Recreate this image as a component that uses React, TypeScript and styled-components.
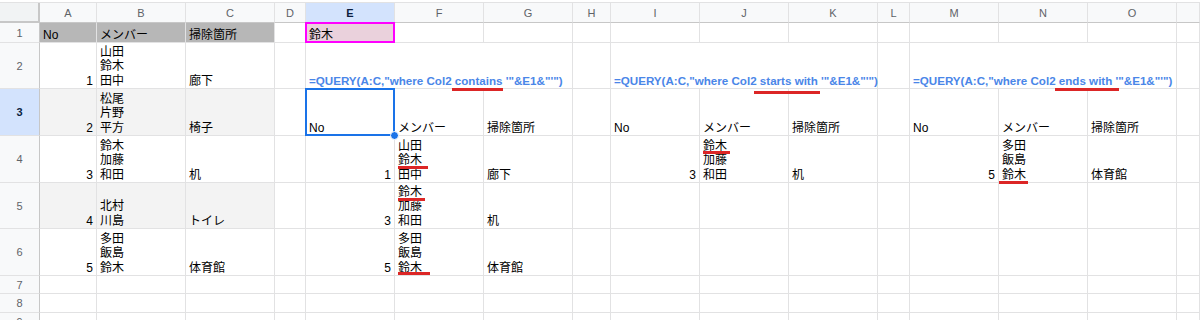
import React from "react";
import styled, { createGlobalStyle } from "styled-components";

const GlobalStyle = createGlobalStyle`
  html, body {
    margin: 0;
    padding: 0;
    background: #fff;
    overflow: hidden;
  }
  body {
    font-family: "Liberation Sans", Arial, "Noto Sans CJK JP", sans-serif;
  }
`;

const COL_WIDTHS = [40, 57, 89, 89, 31, 89, 89, 89, 38, 89, 89, 89, 32, 89, 89, 89, 23];
const ROW_HEIGHTS = [20, 20, 46, 47, 47, 46, 47, 18, 19, 19];
const LETTERS = ["A", "B", "C", "D", "E", "F", "G", "H", "I", "J", "K", "L", "M", "N", "O", "P"];

const GRID = "#e2e2e3";
const HEAD_EDGE = "#c7c7c7";

const Sheet = styled.div`
  display: grid;
  grid-template-columns: ${COL_WIDTHS.map((w) => w + "px").join(" ")};
  grid-template-rows: ${ROW_HEIGHTS.map((h) => h + "px").join(" ")};
  margin-top: 2px;
  border-top: 1px solid ${GRID};
  width: 1200px;
  overflow: hidden;
`;

const Corner = styled.div`
  box-sizing: border-box;
  background: #f1f3f4;
  border-right: 2px solid ${HEAD_EDGE};
  border-bottom: 2px solid ${HEAD_EDGE};
`;

const ColHead = styled.div<{ $active?: boolean }>`
  box-sizing: border-box;
  display: flex;
  align-items: center;
  justify-content: center;
  background: ${(p) => (p.$active ? "#d3e3fd" : "#f8f9fa")};
  border-right: 1px solid ${GRID};
  border-bottom: 1px solid ${HEAD_EDGE};
  font-size: 11px;
  color: ${(p) => (p.$active ? "#0b1e3f" : "#5f6368")};
  font-weight: ${(p) => (p.$active ? 700 : 400)};
`;

const RowHead = styled.div<{ $active?: boolean }>`
  box-sizing: border-box;
  display: flex;
  align-items: center;
  justify-content: center;
  background: ${(p) => (p.$active ? "#d3e3fd" : "#f8f9fa")};
  border-right: 1px solid ${HEAD_EDGE};
  border-bottom: 1px solid ${GRID};
  font-size: 11px;
  color: ${(p) => (p.$active ? "#0b1e3f" : "#5f6368")};
  font-weight: ${(p) => (p.$active ? 700 : 400)};
`;

const Cell = styled.div<{ $bg?: string; $right?: boolean; $span?: number }>`
  position: relative;
  box-sizing: border-box;
  grid-column: span ${(p) => p.$span ?? 1};
  display: flex;
  flex-direction: column;
  justify-content: flex-end;
  align-items: ${(p) => (p.$right ? "flex-end" : "flex-start")};
  padding: 0 3px 0;
  background: ${(p) => p.$bg ?? "#fff"};
  border-right: 1px solid ${GRID};
  border-bottom: 1px solid ${GRID};
  font-size: 12px;
  line-height: 14.5px;
  color: #000;
  white-space: nowrap;
`;

const Line = styled.span`
  display: block;
`;

const Formula = styled.span`
  display: block;
  font-size: 11.6px;
  font-weight: 700;
  color: #4a86e8;
`;

const Mark = styled.span<{ $drop: number; $l: number; $r: number }>`
  position: relative;
  display: inline-block;
  &::after {
    content: "";
    position: absolute;
    z-index: 3;
    left: ${(p) => -p.$l}px;
    right: ${(p) => -p.$r}px;
    bottom: ${(p) => -p.$drop}px;
    height: 3px;
    background: #dc2626;
  }
`;

const Frame = styled.div<{ $color: string }>`
  position: absolute;
  z-index: 2;
  inset: -1px -1px -1px -1px;
  border: 2px solid ${(p) => p.$color};
  pointer-events: none;
`;

const Handle = styled.div`
  position: absolute;
  z-index: 4;
  right: -5px;
  bottom: -5px;
  width: 7px;
  height: 7px;
  border-radius: 50%;
  background: #1a73e8;
  border: 1px solid #fff;
`;

type CellSpec = {
  lines: React.ReactNode[];
  right?: boolean;
  span?: number;
  bg?: string;
  frame?: string;
  selected?: boolean;
  formula?: boolean;
};

const m = (text: string, drop: number, l = 1, r = 4) => (
  <Mark $drop={drop} $l={l} $r={r}>
    {text}
  </Mark>
);

const formula = (kind: string, drop: number, l: number, r: number) => (
  <>
    {'=QUERY(A:C,"where Col2 '}
    {m(kind, drop, l, r)}
    {` '"&E1&"'")`}
  </>
);

const HEAD = "#b7b7b7";
const LIGHT = "#f3f3f3";

const cells: Record<string, CellSpec> = {
  A1: { lines: ["No"], bg: HEAD },
  B1: { lines: ["メンバー"], bg: HEAD },
  C1: { lines: ["掃除箇所"], bg: HEAD },
  E1: { lines: ["鈴木"], bg: "#ead1dc", frame: "#ff00ff" },

  A2: { lines: ["1"], right: true },
  B2: { lines: ["山田", "鈴木", "田中"] },
  C2: { lines: ["廊下"] },
  E2: { lines: [formula("contains", 3, 3, 0)], span: 3, formula: true },
  I2: { lines: [formula("starts with", 6, 6, 2)], span: 3, formula: true },
  M2: { lines: [formula("ends with", 3, 4, 7)], span: 3, formula: true },

  A3: { lines: ["2"], right: true, bg: LIGHT },
  B3: { lines: ["松尾", "片野", "平方"], bg: LIGHT },
  C3: { lines: ["椅子"], bg: LIGHT },
  E3: { lines: ["No"], selected: true },
  F3: { lines: ["メンバー"] },
  G3: { lines: ["掃除箇所"] },
  I3: { lines: ["No"] },
  J3: { lines: ["メンバー"] },
  K3: { lines: ["掃除箇所"] },
  M3: { lines: ["No"] },
  N3: { lines: ["メンバー"] },
  O3: { lines: ["掃除箇所"] },

  A4: { lines: ["3"], right: true },
  B4: { lines: ["鈴木", "加藤", "和田"] },
  C4: { lines: ["机"] },
  E4: { lines: ["1"], right: true },
  F4: { lines: ["山田", m("鈴木", 1.5, 0, 6), "田中"] },
  G4: { lines: ["廊下"] },
  I4: { lines: ["3"], right: true },
  J4: { lines: [m("鈴木", 1, 0, 3), "加藤", "和田"] },
  K4: { lines: ["机"] },
  M4: { lines: ["5"], right: true },
  N4: { lines: ["多田", "飯島", m("鈴木", 2, 3, 2)] },
  O4: { lines: ["体育館"] },

  A5: { lines: ["4"], right: true, bg: LIGHT },
  B5: { lines: ["北村", "川島"], bg: LIGHT },
  C5: { lines: ["トイレ"], bg: LIGHT },
  E5: { lines: ["3"], right: true },
  F5: { lines: [m("鈴木", 1.5, 0, 3), "加藤", "和田"] },
  G5: { lines: ["机"] },

  A6: { lines: ["5"], right: true },
  B6: { lines: ["多田", "飯島", "鈴木"] },
  C6: { lines: ["体育館"] },
  E6: { lines: ["5"], right: true },
  F6: { lines: ["多田", "飯島", m("鈴木", 0, 0, 8)] },
  G6: { lines: ["体育館"] },
};

function renderRow(row: number) {
  const out: React.ReactNode[] = [
    <RowHead key={`h${row}`} $active={row === 3}>
      {row}
    </RowHead>,
  ];
  let skip = 0;
  LETTERS.forEach((letter) => {
    if (skip > 0) {
      skip--;
      return;
    }
    const id = `${letter}${row}`;
    const spec = cells[id];
    if (!spec) {
      out.push(<Cell key={id} />);
      return;
    }
    if (spec.span) skip = spec.span - 1;
    out.push(
      <Cell key={id} $bg={spec.bg} $right={spec.right} $span={spec.span}>
        {spec.lines.map((line, i) =>
          spec.formula ? <Formula key={i}>{line}</Formula> : <Line key={i}>{line}</Line>
        )}
        {spec.frame && <Frame $color={spec.frame} />}
        {spec.selected && (
          <>
            <Frame $color="#1a73e8" />
            <Handle />
          </>
        )}
      </Cell>
    );
  });
  return out;
}

export default function App() {
  return (
    <>
      <GlobalStyle />
      <Sheet>
        <Corner />
        {LETTERS.map((letter) => (
          <ColHead key={letter} $active={letter === "E"}>
            {letter === "P" ? "" : letter}
          </ColHead>
        ))}
        {Array.from({ length: 9 }, (_, i) => renderRow(i + 1))}
      </Sheet>
    </>
  );
}
